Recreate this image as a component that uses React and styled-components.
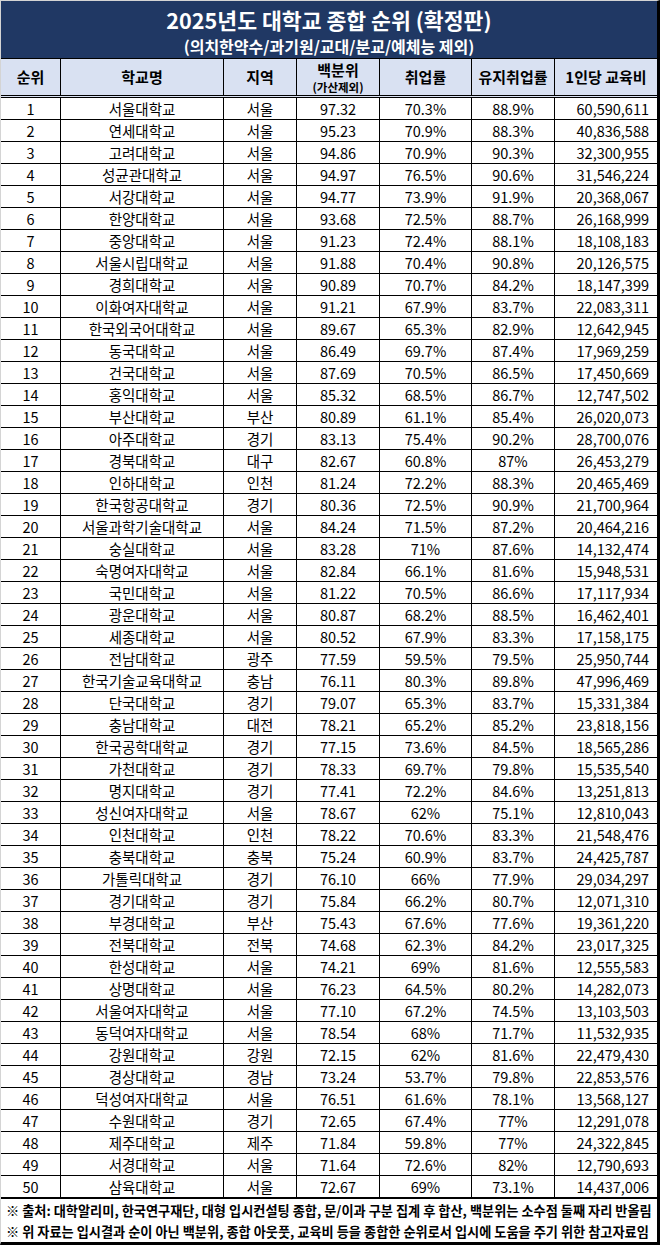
import React from 'react';
import styled, { createGlobalStyle } from 'styled-components';

const COLS = '60px 163px 73px 83px 92px 83px 102px';

const rows = [
  [1, '서울대학교', '서울', '97.32', '70.3%', '88.9%', '60,590,611'],
  [2, '연세대학교', '서울', '95.23', '70.9%', '88.3%', '40,836,588'],
  [3, '고려대학교', '서울', '94.86', '70.9%', '90.3%', '32,300,955'],
  [4, '성균관대학교', '서울', '94.97', '76.5%', '90.6%', '31,546,224'],
  [5, '서강대학교', '서울', '94.77', '73.9%', '91.9%', '20,368,067'],
  [6, '한양대학교', '서울', '93.68', '72.5%', '88.7%', '26,168,999'],
  [7, '중앙대학교', '서울', '91.23', '72.4%', '88.1%', '18,108,183'],
  [8, '서울시립대학교', '서울', '91.88', '70.4%', '90.8%', '20,126,575'],
  [9, '경희대학교', '서울', '90.89', '70.7%', '84.2%', '18,147,399'],
  [10, '이화여자대학교', '서울', '91.21', '67.9%', '83.7%', '22,083,311'],
  [11, '한국외국어대학교', '서울', '89.67', '65.3%', '82.9%', '12,642,945'],
  [12, '동국대학교', '서울', '86.49', '69.7%', '87.4%', '17,969,259'],
  [13, '건국대학교', '서울', '87.69', '70.5%', '86.5%', '17,450,669'],
  [14, '홍익대학교', '서울', '85.32', '68.5%', '86.7%', '12,747,502'],
  [15, '부산대학교', '부산', '80.89', '61.1%', '85.4%', '26,020,073'],
  [16, '아주대학교', '경기', '83.13', '75.4%', '90.2%', '28,700,076'],
  [17, '경북대학교', '대구', '82.67', '60.8%', '87%', '26,453,279'],
  [18, '인하대학교', '인천', '81.24', '72.2%', '88.3%', '20,465,469'],
  [19, '한국항공대학교', '경기', '80.36', '72.5%', '90.9%', '21,700,964'],
  [20, '서울과학기술대학교', '서울', '84.24', '71.5%', '87.2%', '20,464,216'],
  [21, '숭실대학교', '서울', '83.28', '71%', '87.6%', '14,132,474'],
  [22, '숙명여자대학교', '서울', '82.84', '66.1%', '81.6%', '15,948,531'],
  [23, '국민대학교', '서울', '81.22', '70.5%', '86.6%', '17,117,934'],
  [24, '광운대학교', '서울', '80.87', '68.2%', '88.5%', '16,462,401'],
  [25, '세종대학교', '서울', '80.52', '67.9%', '83.3%', '17,158,175'],
  [26, '전남대학교', '광주', '77.59', '59.5%', '79.5%', '25,950,744'],
  [27, '한국기술교육대학교', '충남', '76.11', '80.3%', '89.8%', '47,996,469'],
  [28, '단국대학교', '경기', '79.07', '65.3%', '83.7%', '15,331,384'],
  [29, '충남대학교', '대전', '78.21', '65.2%', '85.2%', '23,818,156'],
  [30, '한국공학대학교', '경기', '77.15', '73.6%', '84.5%', '18,565,286'],
  [31, '가천대학교', '경기', '78.33', '69.7%', '79.8%', '15,535,540'],
  [32, '명지대학교', '경기', '77.41', '72.2%', '84.6%', '13,251,813'],
  [33, '성신여자대학교', '서울', '78.67', '62%', '75.1%', '12,810,043'],
  [34, '인천대학교', '인천', '78.22', '70.6%', '83.3%', '21,548,476'],
  [35, '충북대학교', '충북', '75.24', '60.9%', '83.7%', '24,425,787'],
  [36, '가톨릭대학교', '경기', '76.10', '66%', '77.9%', '29,034,297'],
  [37, '경기대학교', '경기', '75.84', '66.2%', '80.7%', '12,071,310'],
  [38, '부경대학교', '부산', '75.43', '67.6%', '77.6%', '19,361,220'],
  [39, '전북대학교', '전북', '74.68', '62.3%', '84.2%', '23,017,325'],
  [40, '한성대학교', '서울', '74.21', '69%', '81.6%', '12,555,583'],
  [41, '상명대학교', '서울', '76.23', '64.5%', '80.2%', '14,282,073'],
  [42, '서울여자대학교', '서울', '77.10', '67.2%', '74.5%', '13,103,503'],
  [43, '동덕여자대학교', '서울', '78.54', '68%', '71.7%', '11,532,935'],
  [44, '강원대학교', '강원', '72.15', '62%', '81.6%', '22,479,430'],
  [45, '경상대학교', '경남', '73.24', '53.7%', '79.8%', '22,853,576'],
  [46, '덕성여자대학교', '서울', '76.51', '61.6%', '78.1%', '13,568,127'],
  [47, '수원대학교', '경기', '72.65', '67.4%', '77%', '12,291,078'],
  [48, '제주대학교', '제주', '71.84', '59.8%', '77%', '24,322,845'],
  [49, '서경대학교', '서울', '71.64', '72.6%', '82%', '12,790,693'],
  [50, '삼육대학교', '서울', '72.67', '69%', '73.1%', '14,437,006'],
];

const Global = createGlobalStyle`
  html, body { margin: 0; padding: 0; background: #fff; }
  body { font-family: "Noto Sans CJK KR", "Noto Sans", sans-serif; color: #000; }
`;

const Sheet = styled.div`
  width: 660px;
  height: 1245px;
  box-sizing: border-box;
  border-top: 1px solid #d4d4d4;
  border-left: 1px solid #d4d4d4;
  border-right: 3px solid #000;
  border-bottom: 3px solid #000;
  display: flex;
  flex-direction: column;
`;

const TitleBand = styled.header`
  background: #203864;
  color: #fff;
  height: 57px;
  box-sizing: border-box;
  padding-top: 6px;
  display: flex;
  flex-direction: column;
  align-items: center;
  gap: 2px;
`;

const Title = styled.h1`
  margin: 0;
  font-size: 21.6px;
  line-height: 26px;
  font-weight: 700;
`;

const Subtitle = styled.div`
  font-size: 16px;
  line-height: 22px;
  font-weight: 700;
`;

const HeadRow = styled.div`
  display: grid;
  grid-template-columns: ${COLS};
  height: 40px;
  box-sizing: border-box;
  border-top: 1px solid #000;
  border-bottom: 3px double #000;
  background: #d9e1f2;
`;

const DataRow = styled.div`
  display: grid;
  grid-template-columns: ${COLS};
  height: 22px;
  box-sizing: border-box;
  border-bottom: 1px solid #000;
`;

const Cell = styled.div`
  display: flex;
  flex-direction: column;
  align-items: ${(p) => (p.$right ? 'flex-end' : 'center')};
  justify-content: center;
  padding-right: ${(p) => (p.$right ? '8px' : '0')};
  border-right: ${(p) => (p.$last ? 'none' : '1px solid #000')};
  font-size: ${(p) => (p.$head ? '15px' : '14.5px')};
  font-weight: ${(p) => (p.$head ? 700 : 400)};
  line-height: 1.2;
  white-space: nowrap;
  overflow: hidden;
`;

const SubLabel = styled.span`
  font-size: 11.5px;
  line-height: 14px;
  margin-top: 1px;
`;

const Footer = styled.footer`
  flex: 1;
  border-top: 1px solid #000;
  padding: 0 0 0 5px;
  display: flex;
  flex-direction: column;
  justify-content: center;
`;

const Note = styled.p`
  margin: 0;
  font-size: 13.2px;
  line-height: 21px;
  font-weight: 700;
  white-space: nowrap;
`;

const heads = ['순위', '학교명', '지역', null, '취업률', '유지취업률', '1인당 교육비'];

export default function App() {
  return (
    <>
      <Global />
      <Sheet>
        <TitleBand>
          <Title>2025년도 대학교 종합 순위 (확정판)</Title>
          <Subtitle>(의치한약수/과기원/교대/분교/예체능 제외)</Subtitle>
        </TitleBand>
        <HeadRow>
          {heads.map((h, i) =>
            h === null ? (
              <Cell key={i} $head>
                백분위
                <SubLabel>(가산제외)</SubLabel>
              </Cell>
            ) : (
              <Cell key={i} $head $last={i === 6}>
                {h}
              </Cell>
            )
          )}
        </HeadRow>
        {rows.map((r) => (
          <DataRow key={r[0]}>
            {r.map((v, i) => (
              <Cell key={i} $right={i === 6} $last={i === 6}>
                {v}
              </Cell>
            ))}
          </DataRow>
        ))}
        <Footer>
          <Note>※ 출처: 대학알리미, 한국연구재단, 대형 입시컨설팅 종합, 문/이과 구분 집계 후 합산, 백분위는 소수점 둘째 자리 반올림</Note>
          <Note>※ 위 자료는 입시결과 순이 아닌 백분위, 종합 아웃풋, 교육비 등을 종합한 순위로서 입시에 도움을 주기 위한 참고자료임</Note>
        </Footer>
      </Sheet>
    </>
  );
}
